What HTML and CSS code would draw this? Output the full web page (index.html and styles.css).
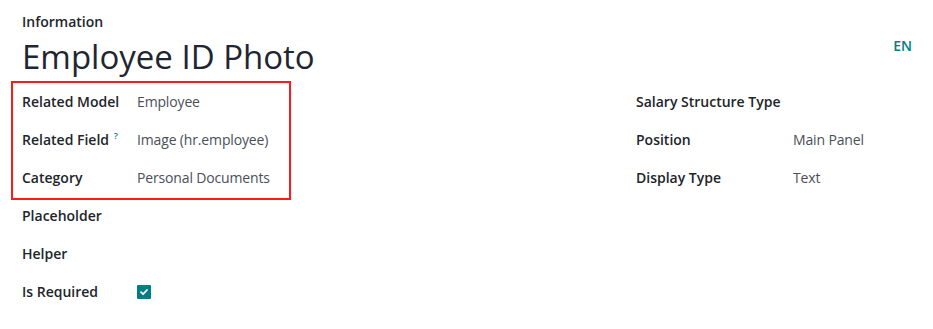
FILE: index.html
```html
<!DOCTYPE html>
<html>
<head>
<meta charset="utf-8">
<link rel="stylesheet" href="styles.css">
</head>
<body>
<div class="sheet">
  <div class="head">
    <div class="head-main">
      <div class="overline">Information</div>
      <h1 class="title">Employee ID Photo</h1>
    </div>
    <div class="lang">EN</div>
  </div>
  <div class="groups">
    <div class="group group-left">
      <div class="row"><div class="label">Related Model</div><div class="value">Employee</div></div>
      <div class="row"><div class="label">Related Field <sup class="tip">?</sup></div><div class="value">Image (hr.employee)</div></div>
      <div class="row"><div class="label">Category</div><div class="value">Personal Documents</div></div>
      <div class="row"><div class="label">Placeholder</div><div class="value"></div></div>
      <div class="row"><div class="label">Helper</div><div class="value"></div></div>
      <div class="row"><div class="label">Is Required</div><div class="value"><span class="check"><svg width="10" height="10" viewBox="0 0 10 10"><path d="M2 5.2 L4.1 7.2 L8 3" fill="none" stroke="#fff" stroke-width="1.8" stroke-linecap="round" stroke-linejoin="round"/></svg></span></div></div>
      <div class="highlight"></div>
    </div>
    <div class="group group-right">
      <div class="row"><div class="label">Salary Structure Type</div><div class="value"></div></div>
      <div class="row"><div class="label">Position</div><div class="value">Main Panel</div></div>
      <div class="row"><div class="label">Display Type</div><div class="value">Text</div></div>
    </div>
  </div>
</div>
</body>
</html>
```
FILE: styles.css
```css
html, body {
  margin: 0;
  padding: 0;
  background: #fff;
}
body {
  font-family: "Open Sans", "Noto Sans", sans-serif;
  color: #212529;
  font-size: 14px;
}
.sheet {
  padding: 12px 0 0 22px;
  width: 912px;
  box-sizing: border-box;
}
.head {
  display: flex;
  justify-content: space-between;
  align-items: flex-start;
}
.overline {
  font-weight: 600;
  font-size: 14px;
  line-height: 20px;
  color: #212529;
}
.title {
  margin: 0;
  font-weight: 400;
  font-size: 33px;
  line-height: 50px;
  color: #1f2631;
}
.lang {
  margin-top: 24px;
  color: #017e84;
  font-weight: 600;
  font-size: 14px;
  line-height: 20px;
}
.groups {
  display: flex;
  margin-top: 1px;
}
.group {
  position: relative;
}
.group-left {
  width: 614px;
}
.row {
  display: flex;
  align-items: center;
  height: 38px;
}
.group-left .label {
  width: 115px;
}
.group-right .label {
  width: 157px;
}
.label {
  font-weight: 600;
  color: #212529;
  line-height: 20px;
  white-space: nowrap;
}
.value {
  color: #4a4f57;
  line-height: 20px;
  white-space: nowrap;
  letter-spacing: -0.15px;
}
.tip {
  font-size: 9px;
  color: #017e84;
  vertical-align: 6px;
  line-height: 0;
  margin-left: 1px;
}
.check {
  display: flex;
  align-items: center;
  justify-content: center;
  width: 14px;
  height: 14px;
  background: #017e84;
  border-radius: 1px;
}
.highlight {
  position: absolute;
  left: -11px;
  top: -2px;
  width: 276px;
  height: 115px;
  border: 2px solid #ff1a1a;
}
```
